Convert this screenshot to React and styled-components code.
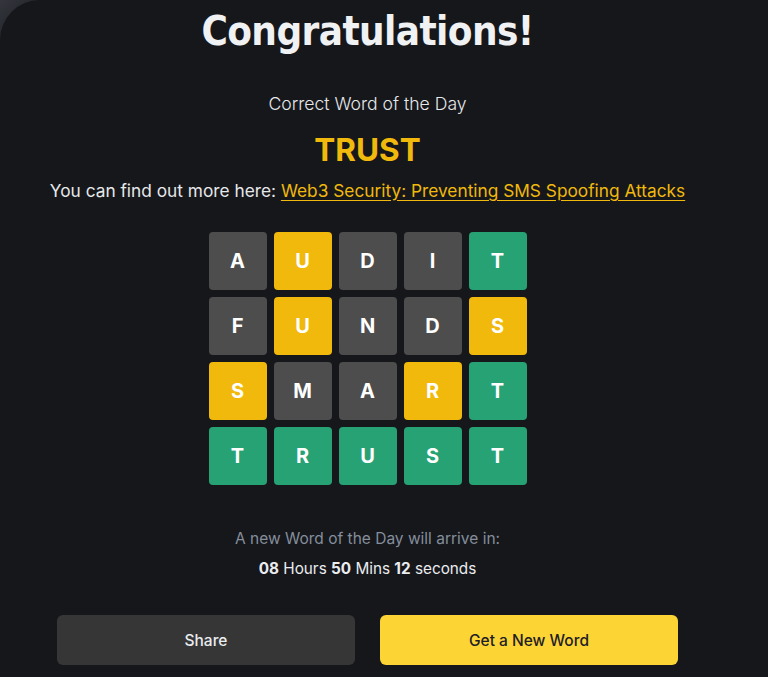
import React from 'react';
import styled, { createGlobalStyle } from 'styled-components';

const GlobalStyle = createGlobalStyle`
    html, body {
        margin: 0;
        padding: 0;
        background: #2a2c33;
    }
    body {
        font-family: Inter, "Noto Sans", Roboto, sans-serif;
        -webkit-font-smoothing: antialiased;
    }
`;

const Page = styled.div`
    width: 768px;
    height: 677px;
    overflow: hidden;
    background: linear-gradient(135deg, #34363d 0%, #24262c 30px, #16171b 60px);
`;

const ResultCard = styled.div`
    width: 768px;
    height: 677px;
    background: #16171b;
    border-top-left-radius: 40px;
`;

const Content = styled.div`
    width: 735px;
    display: flex;
    flex-direction: column;
    align-items: center;
    padding-top: 3px;
`;

const Heading = styled.h1`
    margin: 0;
    font-family: "DejaVu Sans Condensed", "DejaVu Sans", sans-serif;
    font-size: 40px;
    font-weight: 700;
    line-height: 56px;
    color: #f0f1f3;
    letter-spacing: -0.6px;
`;

const Label = styled.div`
    margin-top: 34px;
    font-size: 17.6px;
    font-weight: 300;
    color: #e6e8ea;
    line-height: 22px;
`;

const Answer = styled.div`
    margin-top: 17px;
    font-size: 31.5px;
    font-weight: 700;
    color: #f0b90b;
    line-height: 36px;
`;

const MoreInfo = styled.p`
    margin: 12px 0 0;
    font-size: 17.3px;
    font-weight: 400;
    color: #e6e8ea;
    line-height: 22px;
`;

const ArticleLink = styled.a`
    color: #f0b90b;
    text-decoration: underline;
    text-underline-offset: 3px;
`;

const Board = styled.div`
    margin-top: 30px;
    display: grid;
    grid-template-columns: repeat(5, 58px);
    grid-auto-rows: 58px;
    gap: 7px;
`;

const tileColors = {
    absent: '#4d4d4d',
    present: '#f0b90b',
    correct: '#26a274',
};

const Tile = styled.div`
    display: flex;
    align-items: center;
    justify-content: center;
    border-radius: 4px;
    background: ${(props) => tileColors[props.status]};
    color: #ffffff;
    font-size: 20px;
    font-weight: 700;
`;

const Countdown = styled.div`
    margin-top: 44px;
    display: flex;
    flex-direction: column;
    align-items: center;
    gap: 10px;
`;

const CountdownLabel = styled.div`
    font-size: 15.5px;
    color: #848e9c;
    line-height: 20px;
`;

const CountdownTime = styled.div`
    font-size: 15.3px;
    color: #eaecef;
    line-height: 20px;

    b {
        font-weight: 700;
    }
`;

const ButtonRow = styled.div`
    margin-top: 36px;
    display: flex;
    gap: 25px;
`;

const ActionButton = styled.button`
    width: 298px;
    height: 50px;
    border: none;
    border-radius: 6px;
    font-family: inherit;
    font-size: 15.5px;
    font-weight: 500;
    background: ${(props) => (props.primary ? '#fcd535' : '#363636')};
    color: ${(props) => (props.primary ? '#1e2026' : '#eaecef')};
    cursor: pointer;
`;

const guesses = [
    [['A', 'absent'], ['U', 'present'], ['D', 'absent'], ['I', 'absent'], ['T', 'correct']],
    [['F', 'absent'], ['U', 'present'], ['N', 'absent'], ['D', 'absent'], ['S', 'present']],
    [['S', 'present'], ['M', 'absent'], ['A', 'absent'], ['R', 'present'], ['T', 'correct']],
    [['T', 'correct'], ['R', 'correct'], ['U', 'correct'], ['S', 'correct'], ['T', 'correct']],
];

const App = () => {
    return (
        <Page>
            <GlobalStyle />
            <ResultCard>
                <Content>
                    <Heading>Congratulations!</Heading>
                    <Label>Correct Word of the Day</Label>
                    <Answer>TRUST</Answer>
                    <MoreInfo>
                        You can find out more here:{' '}
                        <ArticleLink href="#">Web3 Security: Preventing SMS Spoofing Attacks</ArticleLink>
                    </MoreInfo>
                    <Board>
                        {guesses.map((row, r) =>
                            row.map(([letter, status], c) => (
                                <Tile key={`${r}-${c}`} status={status}>
                                    {letter}
                                </Tile>
                            ))
                        )}
                    </Board>
                    <Countdown>
                        <CountdownLabel>A new Word of the Day will arrive in:</CountdownLabel>
                        <CountdownTime>
                            <b>08</b> Hours <b>50</b> Mins <b>12</b> seconds
                        </CountdownTime>
                    </Countdown>
                    <ButtonRow>
                        <ActionButton>Share</ActionButton>
                        <ActionButton primary>Get a New Word</ActionButton>
                    </ButtonRow>
                </Content>
            </ResultCard>
        </Page>
    );
};

export default App;
